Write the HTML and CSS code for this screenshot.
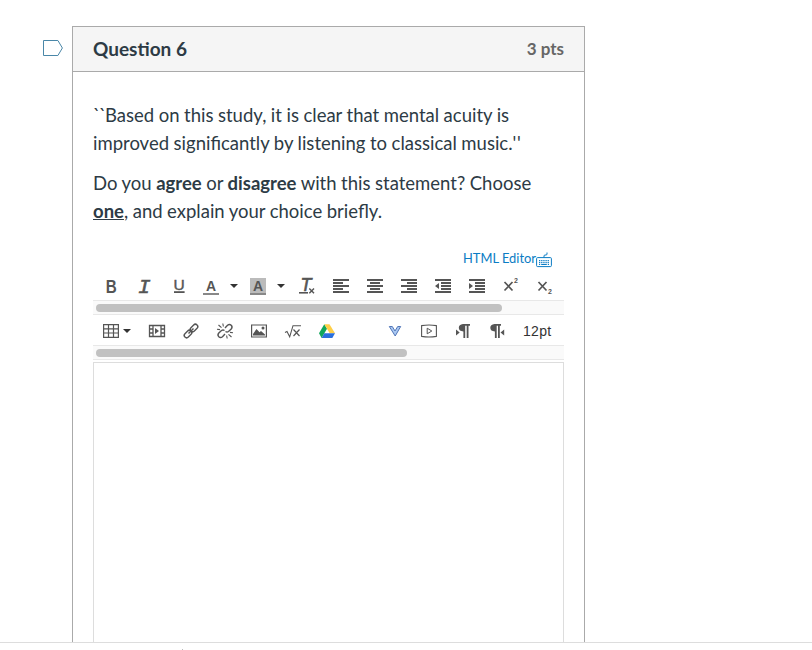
FILE: index.html
```html
<!DOCTYPE html>
<html lang="en">
<head>
  <meta charset="UTF-8">
  <title>Quiz</title>
  <link rel="stylesheet" href="styles.css">
</head>
<body>
  <div class="quiz">
    <svg class="flag" width="21" height="17" viewBox="0 0 21 17"><path d="M.5.5h14.4l4.5 7.5-4.5 7.5H.5z" fill="none" stroke="#4a87a8"/></svg>

    <div class="question">
      <div class="header">
        <span class="name">Question 6</span>
        <span class="points">3 pts</span>
      </div>

      <div class="text">
        <p><span class="ticks">``</span>Based on this study, it is clear that mental acuity is<br>improved significantly by listening to classical music.<span class="quotes">''</span></p>
        <p>Do you <strong>agree</strong> or <strong>disagree</strong> with this statement? Choose<br><strong><u>one</u></strong>, and explain your choice briefly.</p>

        <div class="links">
          <a class="html-link">HTML Editor</a>
          <svg width="16" height="16" viewBox="0 0 16 16" fill="none" stroke="#0b7cc4"><rect x=".6" y="5.6" width="14.8" height="9" rx="1"/><path d="M8 5.5V4q0-1 1-1h1q1 0 1-1V.5"/><path d="M3 8.6h10M3 10.6h10" stroke-width="1.3" stroke-dasharray="1.3 .85"/><path d="M3 12.5h1.2M5.2 12.5h5.6M11.8 12.5H13"/></svg>
        </div>

        <!-- first toolbar row -->
        <div class="toolbar">
          <div class="btn"><svg class="icon"><text x="2.7" y="14.7" font-size="19" font-weight="bold" textLength="11" lengthAdjust="spacingAndGlyphs">B</text></svg></div>
          <div class="btn"><svg class="icon"><text class="mono" x="1" y="14.7" font-size="21" font-style="italic" stroke="#555" stroke-width=".6">I</text></svg></div>
          <div class="btn"><svg class="icon"><text x="2.4" y="12" font-size="15" textLength="11.2" lengthAdjust="spacingAndGlyphs" stroke="#555" stroke-width=".4">U</text><path d="M3 13.2h10.6V15H3z"/></svg></div>
          <div class="btn split"><svg class="icon"><text x="3" y="13" font-size="14" font-weight="bold">A</text><path d="M0 15h16v2H0z" fill="#888"/></svg><i class="caret"></i></div>
          <div class="btn split"><svg class="icon"><path d="M0 0h16v17H0z" fill="#bbb"/><text x="3" y="13" font-size="14" font-weight="bold">A</text><path d="M0 15h16v2H0z" fill="#888"/></svg><i class="caret"></i></div>
          <div class="btn"><svg class="icon"><path d="M0 14h9v1.6H0z"/><text x="1.6" y="13" font-size="18" font-style="italic" stroke="#555" stroke-width=".6">T</text><path d="M10.3 10.5l4.7 4.8M15 10.5l-4.7 4.8" stroke="#555" stroke-width="1.4"/></svg></div>
          <div class="btn"><svg class="icon"><path d="M0 1h16v2H0zM0 4h10v2H0zM0 7h16v2H0zM0 10h10v2H0zM0 13h16v2H0z"/></svg></div>
          <div class="btn"><svg class="icon"><path d="M0 1h16v2H0zM3 4h10v2H3zM0 7h16v2H0zM3 10h10v2H3zM0 13h16v2H0z"/></svg></div>
          <div class="btn"><svg class="icon"><path d="M0 1h16v2H0zM6 4h10v2H6zM0 7h16v2H0zM6 10h10v2H6zM0 13h16v2H0z"/></svg></div>
          <div class="btn"><svg class="icon"><path d="M0 1h16v2H0zM6 4h10v2H6zM6 7h10v2H6zM6 10h10v2H6zM0 13h16v2H0zM4 5v6L0 8z"/></svg></div>
          <div class="btn"><svg class="icon"><path d="M0 1h16v2H0zM6 4h10v2H6zM6 7h10v2H6zM6 10h10v2H6zM0 13h16v2H0zM0 5v6l4-3z"/></svg></div>
          <div class="btn"><svg class="icon"><path d="M1.5 4l8 8.5M9.5 4l-8 8.5" stroke="#555" stroke-width="1.7"/><text x="11" y="5" font-size="7" font-weight="bold">2</text></svg></div>
          <div class="btn"><svg class="icon"><path d="M1.5 4l8 8.5M9.5 4l-8 8.5" stroke="#555" stroke-width="1.7"/><text x="11" y="16" font-size="7" font-weight="bold">2</text></svg></div>
        </div>
        <div class="scroll"><div class="thumb"></div></div>

        <!-- second toolbar row -->
        <div class="toolbar second">
          <div class="btn table"><svg class="icon"><path d="M.6 1.6h14.8v12.8H.6zM0 5.8h16M0 10h16M5.5 1.5v13M10.5 1.5v13" fill="none" stroke="#555" stroke-width="1.2"/></svg><i class="caret"></i></div>
          <div class="btn"><svg class="icon"><path d="M.5 2.5h15v11H.5zM4 2v12M12 2v12M.5 6H4M.5 10H4M12 6h3.5M12 10h3.5" fill="none" stroke="#555" stroke-width="1.3"/><path d="M6 5v6l4-3z"/></svg></div>
          <div class="btn"><svg class="icon"><g fill="none" stroke="#555" stroke-width="1.4"><rect x="-4.3" y="-2.4" width="8.6" height="4.8" rx="2.4" transform="translate(11 5) rotate(-45)"/><rect x="-4.3" y="-2.4" width="8.6" height="4.8" rx="2.4" transform="translate(5 11) rotate(-45)"/><path d="M5.5 10.5l5-5"/></g></svg></div>
          <div class="btn"><svg class="icon"><g fill="none" stroke="#555" stroke-width="1.4"><path d="M8 5l2.5-2.7q2-1.6 3.7 0t0 3.7L11.5 8.5q-1.5 1-3 0M8 11l-2.5 2.7q-2 1.6-3.7 0t0-3.7L4.5 7.5q1.5-1 3 0"/><path d="M5.8.5l.6 3M1.5 2l3 2.7M0 6.2l3 .4M10.2 15.5l-.6-3M14.5 14l-3-2.7M16 9.8l-3-.4" stroke-width="1.1"/></g></svg></div>
          <div class="btn"><svg class="icon"><path d="M.6 2h14.8v12H.6z" fill="none" stroke="#555" stroke-width="1.2"/><path d="M2 12.5V11l3.5-5 3 3.2L10 8l4 3.5v1z"/><circle cx="12" cy="5" r="1.5"/></svg></div>
          <div class="btn"><svg class="icon"><path d="M0 9.5l2-1 2.7 5.3L8 2.7h8" fill="none" stroke="#555" stroke-width="1.1"/><path d="M8.5 6.5l6 6.5M14.5 6.5l-6 6.5" stroke="#555" stroke-width="1.2"/></svg></div>
          <div class="btn"><svg class="icon"><path d="M5.3 1.2L0 10.3 2.6 15 8 5.8z" fill="#11a75c"/><path d="M5.3 1.2h5.2l5.5 9.1h-5.3z" fill="#ffcf48"/><path d="M5.3 10.3H16L13.3 15H2.6z" fill="#2a6fdd"/></svg></div>
          <div class="btn"></div>
          <div class="btn"><svg class="icon"><path d="M2.3 3.5h3L8 8l2.7-4.5h3L8.2 13z" fill="#a9c8f2" stroke="#5377b8"/></svg></div>
          <div class="btn"><svg class="icon"><path d="M.6 2.6Q8 1.4 15.4 2.6v10.8Q8 14.6.6 13.4z" fill="none" stroke="#555" stroke-width="1.1"/><path d="M6.2 5.2l4.6 2.8-4.6 2.8z" fill="none" stroke="#555"/></svg></div>
          <div class="btn"><svg class="icon"><path d="M1 6.5v6L4.7 9.5z"/><path d="M15 1v1.8h-1.5V15h-1.8V2.8h-1.5V15H8.4V8.5Q3.8 8.2 3.8 4.8T8 1z"/></svg></div>
          <div class="btn"><svg class="icon"><path d="M15.2 6.5v6l-3.7-3z"/><path d="M12 1v1.8h-1.2V15H9V2.8H7.7V15H5.9V8.5Q1.3 8.2 1.3 4.8T5.5 1z"/></svg></div>
          <div class="size">12pt</div>
        </div>
        <div class="scroll"><div class="thumb short"></div></div>

        <div class="editor"></div>
      </div>
    </div>
  </div>
  <div class="footer"><div class="dot"></div></div>
</body>
</html>
```

FILE: styles.css
```css
* { box-sizing: border-box; }
body { margin: 0; height: 650px; overflow: hidden; background: #fff; font-family: Lato, sans-serif; color: #2d3b45; }
.quiz { display: flex; align-items: flex-start; height: 642px; padding: 26px 0 0 43px; overflow: hidden; }
.flag { flex: none; margin: 14px 8px 0 0; }
.question { width: 513px; height: 640px; border: 1px solid #aaa; }

.header { display: flex; justify-content: space-between; align-items: center; height: 45px; padding: 0 20px 2px; background: #f5f5f5; border-bottom: 1px solid #aaa; font-weight: bold; }
.name { font-size: 19px; }
.points { font-size: 17px; color: #666; }

.text { padding: 29px 20px 0; }
.text p { margin: 0 0 12px; font-size: 18.5px; line-height: 28px; word-spacing: -.2px; white-space: nowrap; }
.ticks { letter-spacing: -1.4px; }
.quotes { letter-spacing: .6px; }

.links { display: flex; justify-content: flex-end; height: 19px; margin-top: 25px; padding-right: 12px; }
.html-link { color: #0b7cc4; font-size: 12.9px; line-height: 17px; }
.links svg { margin-top: 2px; }

.toolbar { display: flex; height: 31px; padding-left: 1px; }
.toolbar.second { height: 30px; }
.btn { display: flex; flex: none; width: 34px; justify-content: center; padding-top: 9px; }
.second .btn { padding-top: 8px; }
.btn.split { width: 47px; justify-content: flex-start; padding-left: 7px; }
.split .caret { margin-left: 11px; }
.btn.table { width: 46px; justify-content: flex-start; padding-left: 9px; }
.table .caret { margin-left: 4px; }
.icon { flex: none; width: 16px; height: 17px; overflow: visible; fill: #555; font-family: "Liberation Sans", Arial, sans-serif; }
.mono { font-family: "Liberation Mono", monospace; }
.caret { width: 0; height: 0; margin-top: 6px; border: 4px solid transparent; border-top-color: #333; border-bottom: 0; }
.size { padding: 8px 0 0 9px; font: 14px/16px "Liberation Sans", Arial, sans-serif; color: #333; letter-spacing: .3px; }

.scroll { height: 15px; padding: 3px; background: #fafafa; border: solid #e8e8e8; border-width: 1px 0; }
.thumb { width: 406px; height: 8px; border-radius: 4px; background: #c1c1c1; }
.thumb.short { width: 311px; }

.editor { height: 300px; margin-top: 2px; border: 1px solid #ddd; }
.footer { height: 8px; padding: 6px 0 0 182px; border-top: 1px solid #ddd; }
.dot { width: 1px; height: 1px; background: #bbb; }
```
